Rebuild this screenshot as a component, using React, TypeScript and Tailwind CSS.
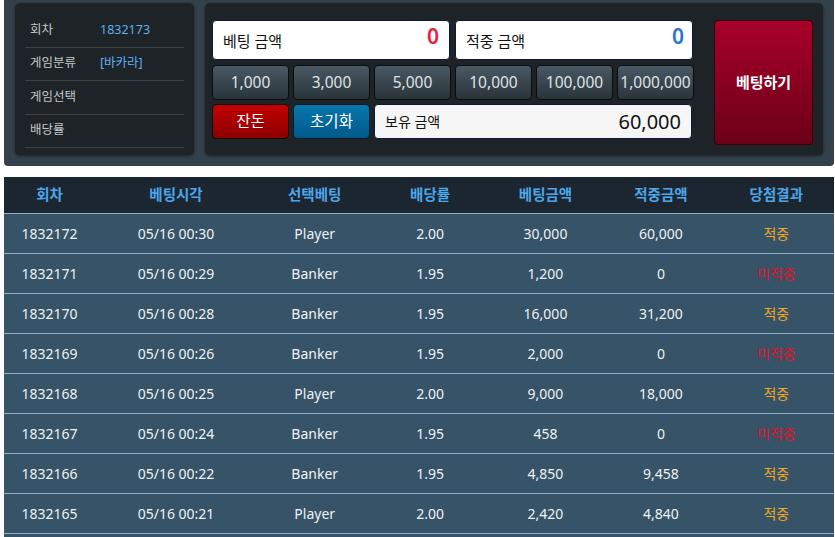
import React from "react";

const rows = [
  ["1832172", "05/16 00:30", "Player", "2.00", "30,000", "60,000", "적중"],
  ["1832171", "05/16 00:29", "Banker", "1.95", "1,200", "0", "미적중"],
  ["1832170", "05/16 00:28", "Banker", "1.95", "16,000", "31,200", "적중"],
  ["1832169", "05/16 00:26", "Banker", "1.95", "2,000", "0", "미적중"],
  ["1832168", "05/16 00:25", "Player", "2.00", "9,000", "18,000", "적중"],
  ["1832167", "05/16 00:24", "Banker", "1.95", "458", "0", "미적중"],
  ["1832166", "05/16 00:22", "Banker", "1.95", "4,850", "9,458", "적중"],
  ["1832165", "05/16 00:21", "Player", "2.00", "2,420", "4,840", "적중"],
];

const headers = ["회차", "베팅시각", "선택베팅", "배당률", "베팅금액", "적중금액", "당첨결과"];
const chips = ["1,000", "3,000", "5,000", "10,000", "100,000", "1,000,000"];

export default function App() {
  return (
    <div
      className="w-[835px] h-[537px] overflow-hidden bg-white"
      style={{ fontFamily: '"Noto Sans", "Noto Sans CJK KR", sans-serif' }}
    >
      {/* Top area */}
      <div className="ml-[4px] w-[830px] h-[166px] bg-[#33414b] rounded-b-[4px] flex gap-[11px] pl-[11px] pr-[11px] pt-[3px]">
        {/* left info panel */}
        <div className="w-[179px] h-[152px] bg-[#1d2327] rounded-[5px] px-[10px] pt-[11px] shadow-[0_1px_3px_rgba(0,0,0,0.5)]">
          {[
            ["회차", "1832173"],
            ["게임분류", "[바카라]"],
            ["게임선택", ""],
            ["배당률", ""],
          ].map(([l, v], i) => (
            <div key={i} className="h-[33.5px] border-b border-[#3a4246] flex items-center text-[12.5px]">
              <span className="w-[75px] pl-[5px] text-[#c4c8ca]">{l}</span>
              <span className="text-[#5fb0ee] text-[12.5px]">{v}</span>
            </div>
          ))}
        </div>
        {/* right panel */}
        <div className="w-[618px] h-[152px] bg-[#1d2327] rounded-[5px] flex pl-[7px] pt-[17px] shadow-[0_1px_3px_rgba(0,0,0,0.5)]">
          <div className="w-[482px] flex flex-col">
            <div className="flex gap-[5px]">
              <div className="w-[238px] h-[40px] bg-white border border-[#0b1a3a] rounded-[4px] flex items-center justify-between pl-[10px] pr-[10px]">
                <span className="text-[15px] text-[#111] mt-[3px]">베팅 금액</span>
                <span className="text-[21px] font-semibold text-[#e8213b] -mt-[6px]">0</span>
              </div>
              <div className="w-[238px] h-[40px] bg-white border border-[#0b1a3a] rounded-[4px] flex items-center justify-between pl-[10px] pr-[8px]">
                <span className="text-[15px] text-[#111] mt-[3px]">적중 금액</span>
                <span className="text-[21px] font-semibold text-[#2a72d8] -mt-[6px]">0</span>
              </div>
            </div>
            <div className="flex gap-[4px] mt-[5px]">
              {chips.map((c) => (
                <div
                  key={c}
                  className="w-[77px] h-[35px] rounded-[4px] border border-[#0a0d10] bg-gradient-to-b from-[#4b5964] to-[#29333a] flex items-center justify-center text-[15.5px] text-[#dfe3e6]"
                >
                  {c}
                </div>
              ))}
            </div>
            <div className="flex gap-[4px] mt-[4px]">
              <div className="w-[77px] h-[35px] rounded-[4px] border border-[#1a0000] bg-gradient-to-b from-[#c40000] to-[#8c0000] flex items-center justify-center text-[15.5px] text-white">
                잔돈
              </div>
              <div className="w-[77px] h-[35px] rounded-[4px] border border-[#001a2a] bg-gradient-to-b from-[#0a76ae] to-[#005a89] flex items-center justify-center text-[15.5px] text-white">
                초기화
              </div>
              <div className="w-[318px] h-[35px] rounded-[4px] bg-[#f6f6f6] border border-[#0b1a3a] flex items-center justify-between pl-[10px] pr-[10px]">
                <span className="text-[14px] text-[#111]">보유 금액</span>
                <span className="text-[20px] text-[#111]">60,000</span>
              </div>
            </div>
          </div>
          <div className="ml-[20px] w-[99px] h-[125px] rounded-[4px] border border-[#3a0008] bg-gradient-to-b from-[#a8002a] to-[#6c0018] flex items-center justify-center text-[15px] font-bold text-white">
            베팅하기
          </div>
        </div>
      </div>

      {/* Table */}
      <div className="ml-[4px] mt-[11px] w-[830px]">
        <div className="grid grid-cols-[91px_162px_repeat(5,1fr)] h-[37px] bg-[#1b2631] border-b border-[#8ab4d0] items-center">
          {headers.map((h) => (
            <div key={h} className="text-center text-[14.5px] font-bold text-[#4ea6ea]">
              {h}
            </div>
          ))}
        </div>
        {rows.map((r) => (
          <div
            key={r[0]}
            className="grid grid-cols-[91px_162px_repeat(5,1fr)] h-[40px] bg-[#375367] border-b border-[#8ab4d0] items-center text-[14px] text-[#eef2f5]"
          >
            {r.map((c, i) => (
              <div
                key={i}
                className={
                  "text-center " +
                  (i === 6 ? (c === "적중" ? "text-[#f4a81c]" : "text-[#e8102a]") : "")
                }
              >
                {c}
              </div>
            ))}
          </div>
        ))}
        <div className="h-[10px] bg-[#375367]" />
      </div>
    </div>
  );
}
